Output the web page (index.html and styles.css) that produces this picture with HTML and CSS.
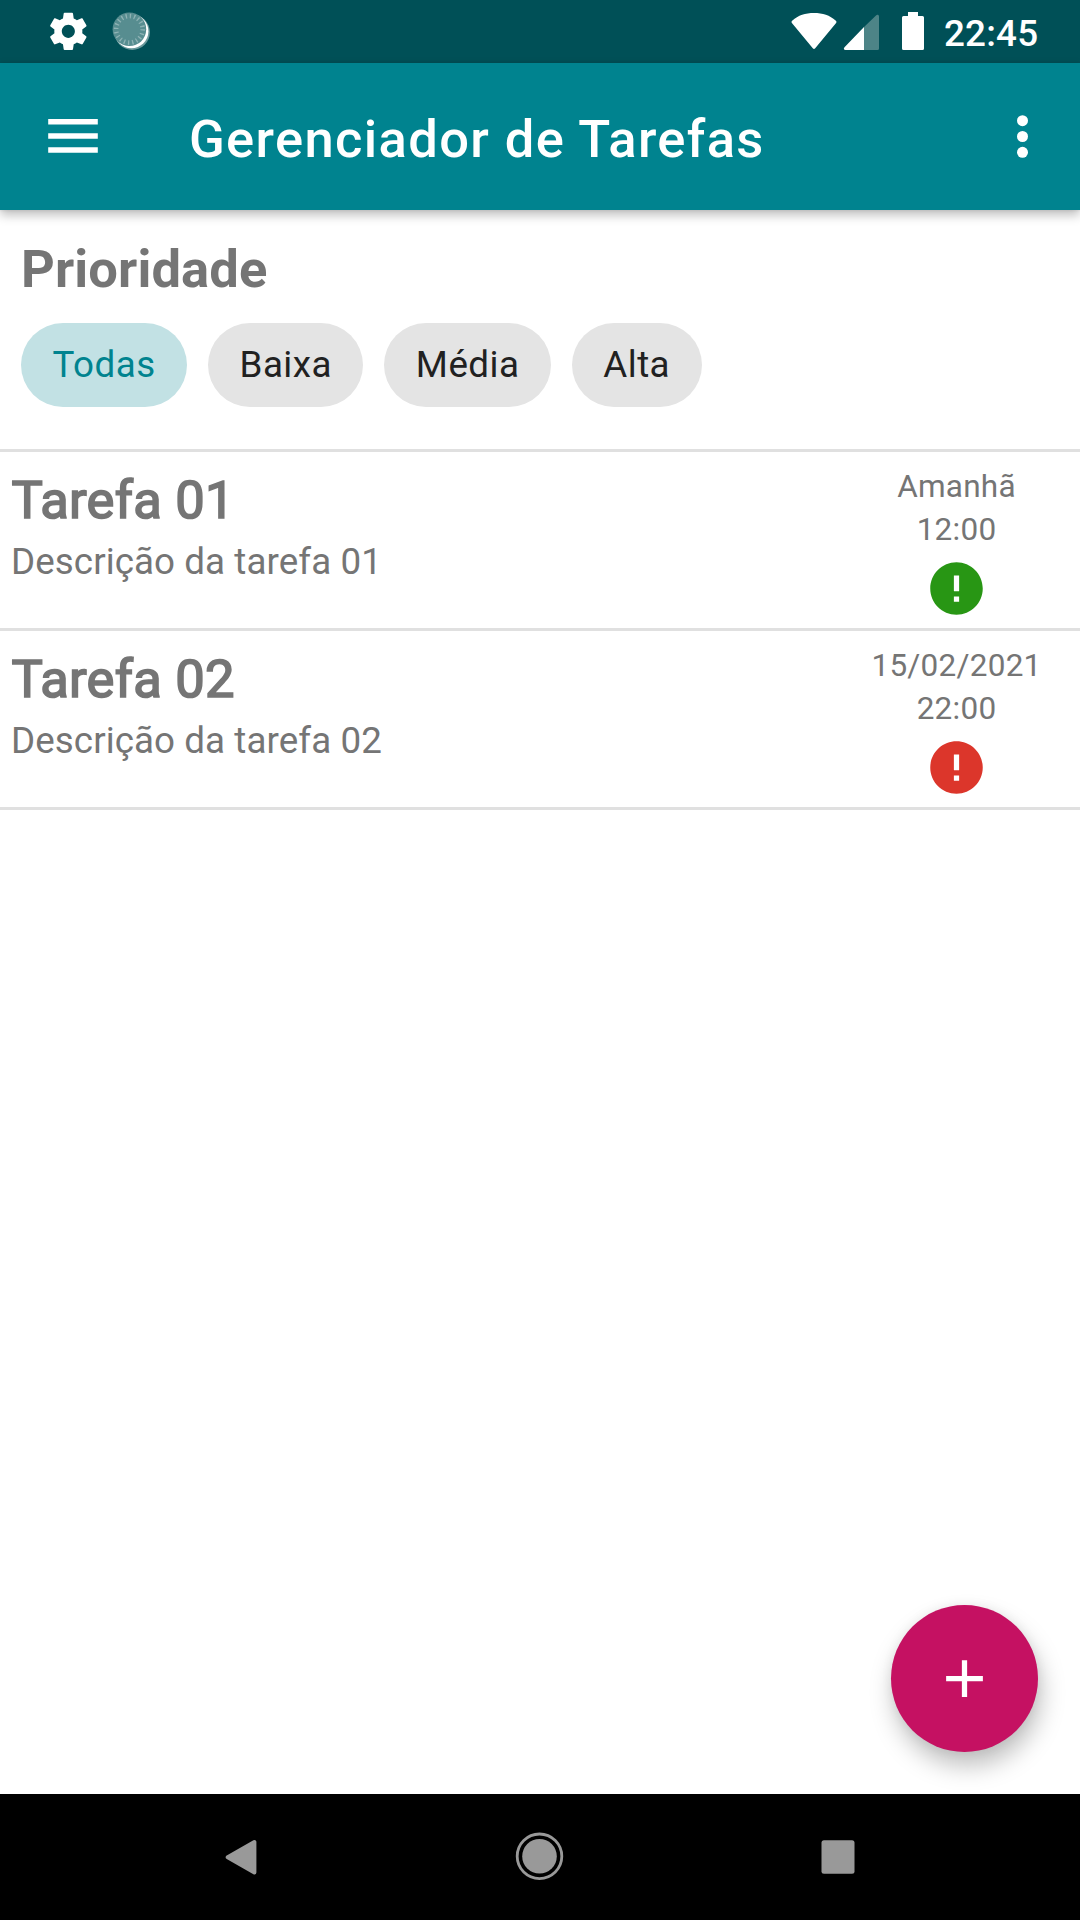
FILE: index.html
```html
<!DOCTYPE html>
<html lang="pt-BR">
<head>
<meta charset="utf-8">
<title>Gerenciador de Tarefas</title>
<link rel="stylesheet" href="styles.css">
</head>
<body>
<div class="screen">
  <header class="status-bar">
    <svg class="status-left" width="160" height="63" viewBox="0 0 160 63">
      <path transform="translate(45.9 8.9) scale(1.87)" fill="#fff" d="M19.43 12.98c.04-.32.07-.64.07-.98s-.03-.66-.07-.98l2.11-1.65c.19-.15.24-.42.12-.64l-2-3.46c-.12-.22-.39-.3-.61-.22l-2.49 1c-.52-.4-1.08-.73-1.69-.98l-.38-2.65C14.46 2.18 14.25 2 14 2h-4c-.25 0-.46.18-.49.42l-.38 2.65c-.61.25-1.17.59-1.69.98l-2.49-1c-.23-.09-.49 0-.61.22l-2 3.46c-.13.22-.07.49.12.64l2.11 1.65c-.04.32-.07.65-.07.98s.03.66.07.98l-2.11 1.65c-.19.15-.24.42-.12.64l2 3.46c.12.22.39.3.61.22l2.49-1c.52.4 1.08.73 1.69.98l.38 2.65c.03.24.24.42.49.42h4c.25 0 .46-.18.49-.42l.38-2.65c.61-.25 1.17-.59 1.69-.98l2.49 1c.23.09.49 0 .61-.22l2-3.46c.12-.22.07-.49-.12-.64l-2.11-1.65zM12 15.5c-1.93 0-3.5-1.57-3.5-3.5s1.57-3.5 3.5-3.5 3.5 1.57 3.5 3.5-1.57 3.5-3.5 3.5z"/>
      <circle cx="132.2" cy="32.2" r="17.7" fill="#6b999c"/>
      <circle cx="131.4" cy="31.2" r="17" fill="#fff"/>
      <circle cx="129.4" cy="29.3" r="16.8" fill="#578d90"/>
      <circle cx="129.4" cy="29.3" r="13.3" fill="none" stroke="#8fb3b5" stroke-width="4.6" stroke-dasharray="1.3 2.878"/>
    </svg>
    <div class="status-right">
      <svg width="145" height="63" viewBox="0 0 145 63">
        <path fill="#fff" d="M2.4 20.4C8 15.4 15.5 13 24 13s16 2.4 21.6 7.4c1.1 1 1.2 1.7.3 2.8L25.2 48.300c-.8 1-1.6 1-2.4 0L2.1 23.2c-.9-1.1-.8-1.8.3-2.8z"/>
        <path fill="#4d8487" d="M74 27v23h13.500q1.500 0 1.500-1.500v-32c0-1.800-1.800-2.200-3-1z"/>
        <path fill="#fff" d="M74 27v23H55.500c-1.700 0-2.200-1.600-1-2.800z"/>
        <path fill="#fff" d="M118 12h10v4h4.500q1.500 0 1.500 1.500v31q0 1.500-1.500 1.500h-19q-1.500 0-1.500-1.500v-31q0-1.500 1.500-1.500h4.500z"/>
      </svg>
      <span class="clock">22:45</span>
    </div>
  </header>

  <div class="app-bar">
    <svg class="menu-icon" width="50" height="36" viewBox="0 0 50 36">
      <path fill="#fff" d="M.2 1h49.600v5.500H.2zM.2 15.200h49.600v5.500H.2zM.2 29.300h49.600v5.500H.2z"/>
    </svg>
    <h1 class="app-title">Gerenciador de Tarefas</h1>
    <svg class="more-icon" width="12" height="44" viewBox="0 0 12 44">
      <g fill="#fff"><circle cx="6.500" cy="5.700" r="5.500"/><circle cx="6.500" cy="21.500" r="5.500"/><circle cx="6.500" cy="37.300" r="5.500"/></g>
    </svg>
  </div>

  <main class="content">
    <section class="filters">
      <h2 class="filters-title">Prioridade</h2>
      <div class="chips">
        <button class="chip chip-selected">Todas</button>
        <button class="chip">Baixa</button>
        <button class="chip">Média</button>
        <button class="chip">Alta</button>
      </div>
    </section>

    <article class="task">
      <div class="task-text">
        <h3 class="task-title">Tarefa 01</h3>
        <p class="task-description">Descrição da tarefa 01</p>
      </div>
      <div class="task-meta">
        <span>Amanhã</span>
        <span>12:00</span>
        <svg class="priority priority-low" viewBox="0 0 24 24"><path d="M12 2C6.480 2 2 6.480 2 12s4.480 10 10 10 10-4.480 10-10S17.520 2 12 2zm1 15h-2v-2h2v2zm0-4h-2V7h2v6z"/></svg>
      </div>
    </article>

    <article class="task">
      <div class="task-text">
        <h3 class="task-title">Tarefa 02</h3>
        <p class="task-description">Descrição da tarefa 02</p>
      </div>
      <div class="task-meta">
        <span>15/02/2021</span>
        <span>22:00</span>
        <svg class="priority priority-high" viewBox="0 0 24 24"><path d="M12 2C6.480 2 2 6.480 2 12s4.480 10 10 10 10-4.480 10-10S17.520 2 12 2zm1 15h-2v-2h2v2zm0-4h-2V7h2v6z"/></svg>
      </div>
    </article>

    <button class="fab" aria-label="Adicionar tarefa">
      <svg width="63" height="63" viewBox="0 0 24 24"><path fill="#fff" d="M19 13h-6v6h-2v-6H5v-2h6V5h2v6h6v2z"/></svg>
    </button>
  </main>

  <nav class="nav-bar">
    <svg width="80" height="80" viewBox="0 0 80 80"><path fill="#999" stroke="#999" stroke-width="4" stroke-linejoin="round" d="M25.700 40.300L52.400 25v30.500z"/></svg>
    <svg width="80" height="80" viewBox="0 0 80 80"><circle cx="39.500" cy="39.300" r="17.300" fill="#999"/><circle cx="39.500" cy="39.300" r="22.300" fill="none" stroke="#999" stroke-width="2.800"/></svg>
    <svg width="80" height="80" viewBox="0 0 80 80"><rect x="23.500" y="23.300" width="33" height="33.400" rx="2.500" fill="#999"/></svg>
  </nav>
</div>
</body>
</html>
```
FILE: styles.css
```css
* {
  box-sizing: border-box;
  margin: 0;
  padding: 0;
}

body {
  font-family: Roboto, "Liberation Sans", sans-serif;
  background: #fff;
  color: #757575;
}

svg {
  display: block;
  flex: none;
}

.screen {
  display: flex;
  flex-direction: column;
  width: 1080px;
  height: 1920px;
  overflow: hidden;
}

.status-bar {
  display: flex;
  flex: none;
  justify-content: space-between;
  height: 63px;
  background: #005057;
}

.status-right {
  display: flex;
  padding-right: 41px;
}

.clock {
  width: 95px;
  margin-left: 9px;
  padding-top: 2px;
  font-size: 36.75px;
  font-weight: 500;
  line-height: 63px;
  letter-spacing: 0.2px;
  color: #fff;
  white-space: nowrap;
}

.app-bar {
  position: relative;
  z-index: 1;
  display: flex;
  flex: none;
  align-items: center;
  height: 147px;
  padding: 0 52px 0 48px;
  background: #00838f;
  box-shadow: 0 5px 10px rgba(0, 0, 0, 0.26), 0 0 3px rgba(0, 0, 0, 0.1);
}

.menu-icon {
  margin-top: -1px;
}

.app-title {
  flex: 1;
  margin-left: 91px;
  padding-top: 5px;
  font-size: 52.5px;
  font-weight: 500;
  line-height: 62px;
  letter-spacing: 1.36px;
  color: #fff;
}

.content {
  position: relative;
  flex: 1;
}

.filters {
  padding: 28px 21px 42px;
}

.filters-title {
  font-size: 52.5px;
  font-weight: 700;
  line-height: 62px;
  letter-spacing: 0.12px;
}

.chips {
  display: flex;
  gap: 21px;
  margin-top: 23px;
}

.chip {
  height: 84px;
  padding: 0 31.5px;
  border: 0;
  border-radius: 42px;
  background: #e4e4e4;
  font: 400 36.75px/84px Roboto, "Liberation Sans", sans-serif;
  letter-spacing: 0.45px;
  color: #212121;
}

.chip-selected {
  background: #c2e1e4;
  color: #00838f;
}

.task {
  display: flex;
  justify-content: space-between;
  height: 179px;
  padding: 0 21px 0 11.5px;
  border-top: 3px solid #e0e0e0;
}

.task:last-of-type {
  height: 182px;
  border-bottom: 3px solid #e0e0e0;
}

.task-text {
  padding-top: 17px;
}

.task-title {
  font-size: 52.5px;
  font-weight: 400;
  line-height: 62px;
  letter-spacing: 0.25px;
  -webkit-text-stroke: 1.64px #757575;
}

.task-description {
  margin-top: 9px;
  margin-left: -0.5px;
  font-size: 36.75px;
  line-height: 43px;
  letter-spacing: 0.08px;
}

.task-meta {
  display: flex;
  flex-direction: column;
  align-items: center;
  width: 205px;
  padding-top: 13px;
  font-size: 31.5px;
  line-height: 43px;
  letter-spacing: 0.25px;
}

.priority {
  width: 63px;
  height: 63px;
  margin-top: 6px;
}

.priority-low {
  fill: #289614;
}

.priority-high {
  fill: #dc362b;
}

.fab {
  position: absolute;
  right: 42px;
  bottom: 42px;
  display: flex;
  align-items: center;
  justify-content: center;
  width: 147px;
  height: 147px;
  border: 0;
  border-radius: 50%;
  background: #c51162;
  box-shadow: 3px 14px 24px rgba(0, 0, 0, 0.25), 0 0 12px rgba(0, 0, 0, 0.06);
}

.nav-bar {
  display: flex;
  flex: none;
  align-items: center;
  justify-content: center;
  gap: 218px;
  height: 126px;
  background: #000;
}
```
